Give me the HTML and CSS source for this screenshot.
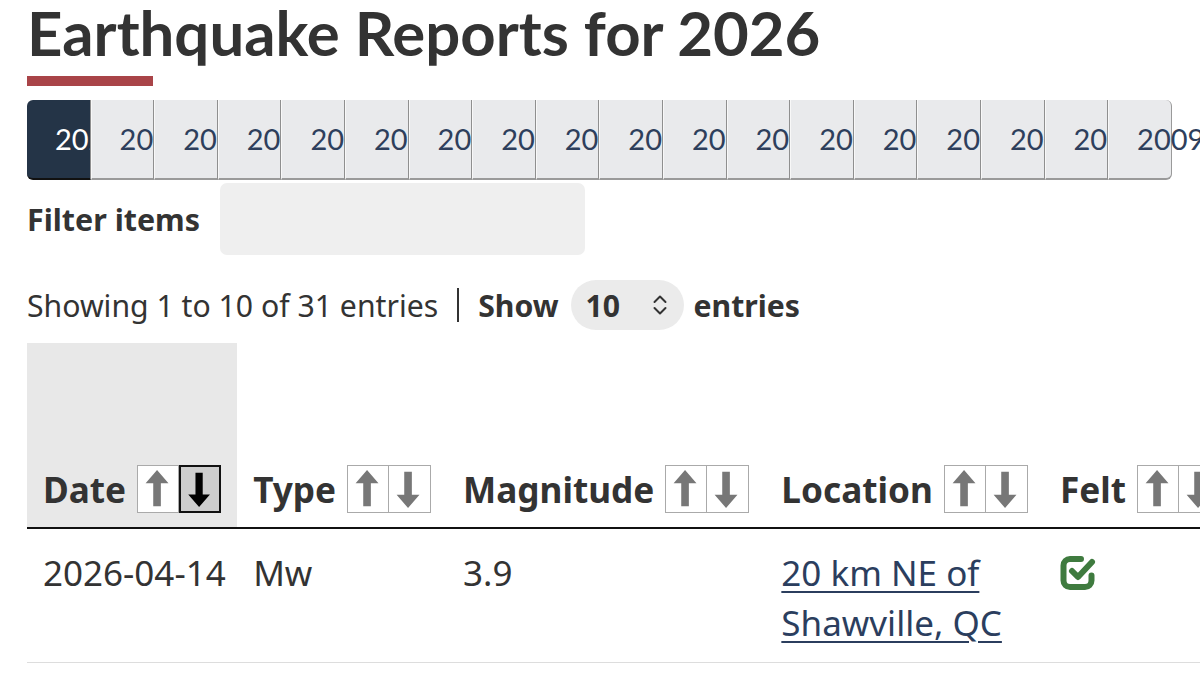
FILE: index.html
```html
<!DOCTYPE html>
<html>
<head>
	<meta charset="utf-8" />
	<link rel="stylesheet" href="styles.css">
</head>
<body>
<div id="reports">

<h1 class="title">Earthquake Reports for 2026</h1>
<div class="title_bar"></div>

<div class="year_tabs">
	<a class="tab active">2026</a>
	<a class="tab">2025</a>
	<a class="tab">2024</a>
	<a class="tab">2023</a>
	<a class="tab">2022</a>
	<a class="tab">2021</a>
	<a class="tab">2020</a>
	<a class="tab">2019</a>
	<a class="tab">2018</a>
	<a class="tab">2017</a>
	<a class="tab">2016</a>
	<a class="tab">2015</a>
	<a class="tab">2014</a>
	<a class="tab">2013</a>
	<a class="tab">2012</a>
	<a class="tab">2011</a>
	<a class="tab">2010</a>
	<a class="tab last">2009</a>
</div>

<div class="filter_row">
	<label class="filter_label" for="filter">Filter items</label>
	<input id="filter" class="filter_input" type="text">
</div>

<div class="info_row">
	<span class="info_text">Showing 1 to 10 of 31 entries</span>
	<span class="info_sep"></span>
	<b>Show</b>
	<span class="page_select">10
		<svg width="16" height="24" viewBox="0 0 16 24"><path d="M2.5 9 L8 3.5 L13.5 9 M2.5 15 L8 20.5 L13.5 15" fill="none" stroke="#333" stroke-width="2" stroke-linecap="round" stroke-linejoin="round"/></svg>
	</span>
	<b>entries</b>
</div>

<div class="table_wrap">
<table class="quakes">
	<thead>
		<tr>
			<th class="sorted">Date<span class="sort"><span class="sort_btn"><svg viewBox="0 0 42 48"><path d="M20 4 L32 18 L24 18 L24 42 L16 42 L16 18 L8 18 Z"/></svg></span><span class="sort_btn on"><svg viewBox="0 0 42 48"><path d="M20 44 L32 30 L24 30 L24 6 L16 6 L16 30 L8 30 Z"/></svg></span></span></th>
			<th>Type<span class="sort"><span class="sort_btn"><svg viewBox="0 0 42 48"><path d="M20 4 L32 18 L24 18 L24 42 L16 42 L16 18 L8 18 Z"/></svg></span><span class="sort_btn"><svg viewBox="0 0 42 48"><path d="M20 44 L32 30 L24 30 L24 6 L16 6 L16 30 L8 30 Z"/></svg></span></span></th>
			<th>Magnitude<span class="sort"><span class="sort_btn"><svg viewBox="0 0 42 48"><path d="M20 4 L32 18 L24 18 L24 42 L16 42 L16 18 L8 18 Z"/></svg></span><span class="sort_btn"><svg viewBox="0 0 42 48"><path d="M20 44 L32 30 L24 30 L24 6 L16 6 L16 30 L8 30 Z"/></svg></span></span></th>
			<th>Location<span class="sort"><span class="sort_btn"><svg viewBox="0 0 42 48"><path d="M20 4 L32 18 L24 18 L24 42 L16 42 L16 18 L8 18 Z"/></svg></span><span class="sort_btn"><svg viewBox="0 0 42 48"><path d="M20 44 L32 30 L24 30 L24 6 L16 6 L16 30 L8 30 Z"/></svg></span></span></th>
			<th>Felt<span class="sort"><span class="sort_btn"><svg viewBox="0 0 42 48"><path d="M20 4 L32 18 L24 18 L24 42 L16 42 L16 18 L8 18 Z"/></svg></span><span class="sort_btn"><svg viewBox="0 0 42 48"><path d="M20 44 L32 30 L24 30 L24 6 L16 6 L16 30 L8 30 Z"/></svg></span></span></th>
		</tr>
	</thead>
	<tbody>
		<tr>
			<td>2026-04-14</td>
			<td>Mw</td>
			<td>3.9</td>
			<td><a class="place" href="#">20 km NE of<br>Shawville, QC</a></td>
			<td><svg class="felt_icon" width="38" height="36" viewBox="0 0 38 36"><path d="M21 4 H10 a6.5 6.5 0 0 0 -6.5 6.5 v15 a6.5 6.5 0 0 0 6.5 6.5 h15 a6.5 6.5 0 0 0 6.5 -6.5 v-5" fill="none" stroke="#3f7b3f" stroke-width="6" stroke-linecap="round"/><path d="M12 16 L18 22 L32 7" fill="none" stroke="#3f7b3f" stroke-width="6" stroke-linecap="round" stroke-linejoin="round"/></svg></td>
		</tr>
	</tbody>
</table>
</div>

</div>
</body>
</html>
```

FILE: styles.css
```css
body {
	margin: 0;
	background: #fff;
	color: #333;
	font-family: "Noto Sans", "Open Sans", sans-serif;
	overflow: hidden;
}

#reports {
	padding: 0 0 0 27px;
}

.title {
	font-family: Lato, sans-serif;
	font-weight: 700;
	font-size: 61.7px;
	line-height: 64px;
	margin: 0;
	color: #333;
}

.title_bar {
	width: 126px;
	height: 10px;
	background-color: #a94448;
	margin: 12px 0 14px;
}

.year_tabs {
	display: flex;
	height: 80px;
}

.tab {
	flex: none;
	width: 63.6px;
	box-sizing: border-box;
	padding-left: 28px;
	background-color: #e9eaec;
	border-right: 1px solid #8f8f8f;
	border-left: 1px solid #f8f8f8;
	border-bottom: 2px solid #9a9a9a;
	font-family: Lato, sans-serif;
	font-size: 29px;
	line-height: 78px;
	color: #2e3f5c;
	white-space: nowrap;
	overflow: hidden;
}

.tab.active {
	background-color: #243447;
	color: #fff;
	border-radius: 6px 0 0 6px;
	border-bottom-color: #111;
	border-left: none;
}

.tab.last {
	overflow: visible;
	border-radius: 0 6px 6px 0;
	border-right-color: #9a9a9a;
}

.filter_row {
	display: flex;
	align-items: center;
	gap: 20px;
	margin-top: 3px;
}

.filter_label {
	font-weight: 700;
	font-size: 30.4px;
}

.filter_input {
	width: 365px;
	height: 72px;
	box-sizing: border-box;
	border: none;
	border-radius: 7px;
	background-color: #efefef;
}

.info_row {
	display: flex;
	align-items: center;
	height: 50px;
	margin-top: 25px;
	font-size: 30.2px;
	white-space: nowrap;
}

.info_sep {
	width: 2px;
	height: 34px;
	background-color: #333;
	margin: 0 19px 0 19px;
}

.page_select {
	display: flex;
	align-items: center;
	justify-content: space-between;
	box-sizing: border-box;
	width: 113px;
	height: 50px;
	padding: 0 16px 0 15px;
	margin: 0 10px 0 12px;
	border-radius: 25px;
	background-color: #ebebeb;
	font-weight: 700;
}

.table_wrap {
	margin-top: 13px;
}

.quakes {
	border-collapse: collapse;
	white-space: nowrap;
}

.quakes th {
	height: 185px;
	box-sizing: border-box;
	padding: 0 16px 14px;
	vertical-align: bottom;
	text-align: left;
	font-size: 35.2px;
	font-weight: 700;
	line-height: 48px;
	border-bottom: 2px solid #111;
}

.quakes th.sorted {
	background-color: #e8e8e8;
}

.sort {
	display: inline-flex;
	vertical-align: bottom;
	margin-left: 11px;
}

.sort_btn {
	display: block;
	width: 42px;
	height: 48px;
	box-sizing: border-box;
	border: 1px solid #aaa;
	background-color: #fff;
}

.sort_btn + .sort_btn {
	border-left: none;
}

.sort_btn svg {
	display: block;
	width: 40px;
	height: 46px;
	fill: #777;
}

.sort_btn.on {
	background-color: #cdcdcd;
	border: 2px solid #111;
}

.sort_btn.on svg {
	width: 38px;
	height: 44px;
	fill: #000;
}

.quakes td {
	padding: 19px 10px 14px 16px;
	vertical-align: top;
	font-size: 35px;
	line-height: 50px;
	border-bottom: 1px solid #ddd;
}

.place {
	color: #2b3e5e;
	text-decoration-thickness: 2px;
	text-underline-offset: 5px;
}

.felt_icon {
	display: block;
	margin-top: 7px;
}
```
